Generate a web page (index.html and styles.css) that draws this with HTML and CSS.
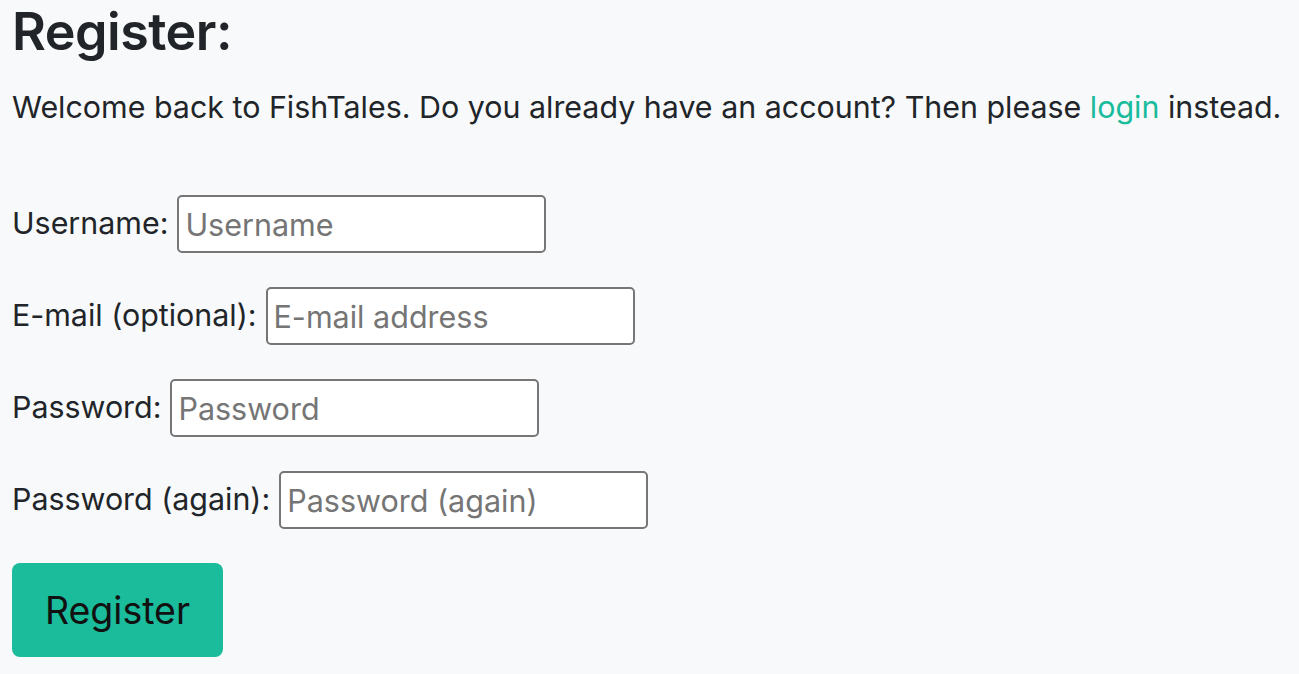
FILE: index.html
```html
<!DOCTYPE html>
<html lang="en">
<head>
<meta charset="utf-8">
<title>Register</title>
<link rel="stylesheet" href="styles.css">
</head>
<body>
<main class="page">
  <h2 class="title">Register:</h2>
  <p class="intro">Welcome back to FishTales. Do you already have an account? Then please <a href="#" class="link">login</a> instead.</p>
  <form class="form">
    <p class="row"><label class="label" for="u">Username:</label> <input class="field" id="u" type="text" placeholder="Username"></p>
    <p class="row"><label class="label" for="e">E-mail (optional):</label> <input class="field" id="e" type="email" placeholder="E-mail address"></p>
    <p class="row"><label class="label" for="p1">Password:</label> <input class="field" id="p1" type="password" placeholder="Password"></p>
    <p class="row"><label class="label" for="p2">Password (again):</label> <input class="field" id="p2" type="password" placeholder="Password (again)"></p>
    <button class="btn" type="submit">Register</button>
  </form>
</main>
</body>
</html>
```

FILE: styles.css
```css
html, body {
  margin: 0;
  padding: 0;
  background: #f8f9fa;
}
body {
  font-family: Inter, "Liberation Sans", sans-serif;
  color: #212529;
  font-size: 30.4px;
  line-height: 1.5;
}
.page {
  padding: 0 12px;
}
.title {
  margin: 0;
  padding-top: 1px;
  font-size: 52px;
  font-weight: 600;
  line-height: 1.2;
  letter-spacing: -0.5px;
}
.intro {
  margin: 22px 0 64px;
}
.link {
  color: #18bc9c;
  text-decoration: none;
}
.form {
  margin: 0;
}
.row {
  margin: 0 0 34px;
  height: 58px;
  display: flex;
  align-items: center;
  gap: 9px;
}
.field {
  box-sizing: border-box;
  width: 369px;
  height: 58px;
  border: 2px solid #767676;
  border-radius: 5px;
  background: #fff;
  font-family: Inter, "Liberation Sans", sans-serif;
  font-size: 30.5px;
  padding: 0 6px;
  color: #212529;
}
.field::placeholder {
  color: #757575;
}
.btn {
  display: block;
  width: 211px;
  height: 94px;
  border: none;
  border-radius: 8px;
  background: #1abc9c;
  color: #111;
  font-family: Inter, "Liberation Sans", sans-serif;
  font-size: 37.5px;
  padding: 0;
}
```
